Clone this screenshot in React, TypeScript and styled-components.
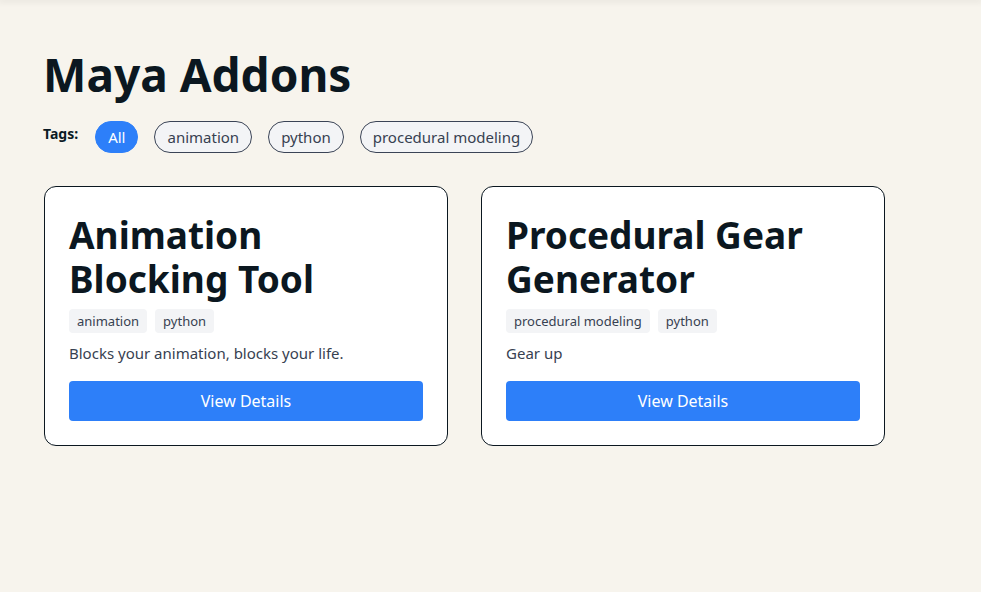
import React from "react";
import styled, { createGlobalStyle } from "styled-components";

const Global = createGlobalStyle`
  html, body { margin: 0; padding: 0; background: #f7f4ed; }
  body { font-family: "Noto Sans", "Open Sans", sans-serif; color: #0b1a24; }
  * { box-sizing: border-box; }
`;

const TopBar = styled.div`
  height: 0;
  box-shadow: 0 0 6px 2px rgba(0, 0, 0, 0.08);
`;

const Page = styled.main`
  padding: 46px 44px 40px 44px;
`;

const Title = styled.h1`
  margin: 0 0 0 -1px;
  font-size: 46px;
  line-height: 56px;
  font-weight: 700;
  color: #0b1720;
`;

const TagsRow = styled.div`
  display: flex;
  align-items: flex-start;
  gap: 16px;
  margin-top: 19px;
`;

const TagsLabel = styled.span`
  font-size: 14px;
  font-weight: 700;
  line-height: 20px;
  margin-top: 3px;
  margin-left: -1px;
  margin-right: 1px;
`;

const Pill = styled.button<{ $active?: boolean }>`
  height: 32px;
  padding: 0 12px;
  border-radius: 16px;
  font-family: inherit;
  font-size: 15px;
  border: 1px solid ${(p) => (p.$active ? "#2d7ff9" : "#3b4456")};
  background: ${(p) => (p.$active ? "#2d7ff9" : "#f3f4f6")};
  color: ${(p) => (p.$active ? "#ffffff" : "#374151")};
`;

const Grid = styled.div`
  display: grid;
  grid-template-columns: repeat(2, 404px);
  gap: 33px;
  margin-top: 33px;
`;

const Card = styled.article`
  background: #ffffff;
  border: 1px solid #0b1720;
  border-radius: 12px;
  padding: 26px 24px 24px;
  display: flex;
  flex-direction: column;
`;

const CardTitle = styled.h2`
  margin: 0;
  font-size: 37px;
  line-height: 44px;
  font-weight: 700;
  color: #0b1720;
`;

const ChipRow = styled.div`
  display: flex;
  gap: 8px;
  margin-top: 8px;
`;

const Chip = styled.span`
  background: #f3f4f6;
  border-radius: 4px;
  padding: 0 8px;
  height: 24px;
  line-height: 24px;
  font-size: 13px;
  color: #374151;
`;

const Desc = styled.p`
  margin: 9px 0 0;
  font-size: 15px;
  line-height: 22px;
  color: #374151;
`;

const Button = styled.button`
  margin-top: 17px;
  height: 40px;
  border: none;
  border-radius: 4px;
  background: #2d7ff9;
  color: #ffffff;
  font-family: inherit;
  font-size: 16px;
  width: 100%;
`;

const addons = [
  {
    title: "Animation Blocking Tool",
    tags: ["animation", "python"],
    desc: "Blocks your animation, blocks your life.",
  },
  {
    title: "Procedural Gear Generator",
    tags: ["procedural modeling", "python"],
    desc: "Gear up",
  },
];

export default function App() {
  return (
    <>
      <Global />
      <TopBar />
      <Page>
        <Title>Maya Addons</Title>
        <TagsRow>
          <TagsLabel>Tags:</TagsLabel>
          <Pill $active>All</Pill>
          <Pill>animation</Pill>
          <Pill>python</Pill>
          <Pill>procedural modeling</Pill>
        </TagsRow>
        <Grid>
          {addons.map((a) => (
            <Card key={a.title}>
              <CardTitle>{a.title}</CardTitle>
              <ChipRow>
                {a.tags.map((t) => (
                  <Chip key={t}>{t}</Chip>
                ))}
              </ChipRow>
              <Desc>{a.desc}</Desc>
              <Button>View Details</Button>
            </Card>
          ))}
        </Grid>
      </Page>
    </>
  );
}
